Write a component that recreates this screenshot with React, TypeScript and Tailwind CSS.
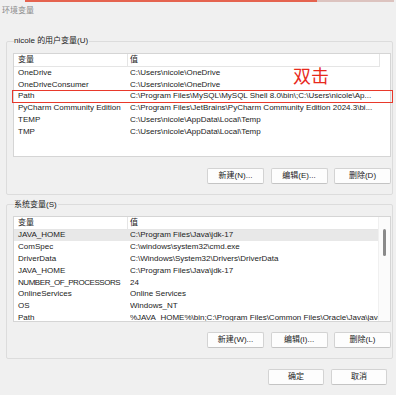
import React from 'react';

type Row = { name: string; value: string; tight?: boolean };

const userVars: Row[] = [
  { name: 'OneDrive', value: 'C:\\Users\\nicole\\OneDrive' },
  { name: 'OneDriveConsumer', value: 'C:\\Users\\nicole\\OneDrive' },
  { name: 'Path', value: 'C:\\Program Files\\MySQL\\MySQL Shell 8.0\\bin\\;C:\\Users\\nicole\\Ap...' },
  { name: 'PyCharm Community Edition', value: 'C:\\Program Files\\JetBrains\\PyCharm Community Edition 2024.3\\bi...' },
  { name: 'TEMP', value: 'C:\\Users\\nicole\\AppData\\Local\\Temp' },
  { name: 'TMP', value: 'C:\\Users\\nicole\\AppData\\Local\\Temp' },
];

const sysVars: Row[] = [
  { name: 'JAVA_HOME', value: 'C:\\Program Files\\Java\\jdk-17' },
  { name: 'ComSpec', value: 'C:\\windows\\system32\\cmd.exe' },
  { name: 'DriverData', value: 'C:\\Windows\\System32\\Drivers\\DriverData' },
  { name: 'JAVA_HOME', value: 'C:\\Program Files\\Java\\jdk-17' },
  { name: 'NUMBER_OF_PROCESSORS', value: '24', tight: true },
  { name: 'OnlineServices', value: 'Online Services' },
  { name: 'OS', value: 'Windows_NT' },
  { name: 'Path', value: '%JAVA_HOME%\\bin;C:\\Program Files\\Common Files\\Oracle\\Java\\javapath' },
];

function Btn({ label, w = 'w-[57px]' }: { label: string; w?: string }) {
  return (
    <button className={`${w} h-[16px] bg-[#fdfdfd] border border-[#d3d3d3] border-b-[#c4c4c4] rounded-[2px] text-[8px] text-[#1b1b1b] leading-none`}>
      {label}
    </button>
  );
}

function Header() {
  return (
    <div className="flex h-[13px] w-[366px] border-b border-[#e5e5e5] items-center text-[8px] leading-none shrink-0">
      <div className="w-[114px] h-full flex items-center pl-[4px] border-r border-[#e5e5e5]">变量</div>
      <div className="flex-1 h-full flex items-center pl-[2px] border-r border-[#e5e5e5]">值</div>
    </div>
  );
}

function VarRow({ row, marked, selected }: { row: Row; marked?: boolean; selected?: boolean }) {
  return (
    <div className={`relative flex h-[11.8px] shrink-0 items-center text-[8px] leading-none whitespace-nowrap ${selected ? 'bg-[#e8e8e8] w-[366px]' : ''}`}>
      <div className={`w-[116px] pl-[4px] shrink-0 overflow-hidden ${row.tight ? 'tracking-[-0.45px]' : ''}`}>{row.name}</div>
      <div className="flex-1 min-w-0 overflow-hidden">{row.value}</div>
      {marked && (
        <span className="absolute -left-[2px] -right-[2.5px] -top-[0.5px] -bottom-[0.5px] border-[1.5px] border-[#e8392b]" />
      )}
    </div>
  );
}

export default function App() {
  return (
    <div className="w-[396px] h-[395px] bg-[#f0f0f0] flex flex-col overflow-hidden text-[#1b1b1b] font-['Liberation_Sans','Noto_Sans_CJK_SC',sans-serif]">
      <div className="flex h-[2px] shrink-0">
        <div className="ml-[25px] w-[292px] bg-[#e5634f]" />
        <div className="w-[77px] bg-[#dcc3bf]" />
      </div>
      <div className="h-[18px] leading-[18px] text-[8px] text-[#8a8a8a] pl-[2px] shrink-0">环境变量</div>

      <fieldset className="min-w-0 mt-[15px] ml-[6px] mr-[3px] border border-[#dcdcdc] rounded-[2px] pb-[10px] pr-[1px] pl-[6px]">
        <legend className="text-[8px] leading-[12px] ml-[1px] pr-[1px]">nicole 的用户变量(U)</legend>
        <div className="relative mt-[6px] h-[104px] bg-white border border-[#d5d5d5]">
          <Header />
          {userVars.map((r) => (
            <VarRow key={r.name} row={r} marked={r.name === 'Path'} />
          ))}
          <span className="absolute left-[279px] top-[14px] text-[18px] leading-none text-[#e8291c]">双击</span>
        </div>
        <div className="flex justify-end gap-[6.5px] mt-[10.5px]">
          <Btn label="新建(N)..." />
          <Btn label="编辑(E)..." />
          <Btn label="删除(D)" />
        </div>
      </fieldset>

      <fieldset className="min-w-0 mt-[4px] ml-[6px] mr-[3px] border border-[#dcdcdc] rounded-[2px] pb-[10px] pr-[1px] pl-[6px]">
        <legend className="text-[8px] leading-[12px] ml-[1px] pr-[1px]">系统变量(S)</legend>
        <div className="mt-[5px] h-[106px] bg-white border border-[#d5d5d5] flex overflow-hidden">
          <div className="flex-1 min-w-0 flex flex-col overflow-hidden">
            <Header />
            {sysVars.map((r, i) => (
              <VarRow key={i} row={r} selected={i === 0} />
            ))}
          </div>
          <div className="w-[12px] border-l border-[#f0f0f0] bg-[#fbfbfb] flex justify-center pt-[12px] shrink-0">
            <div className="w-[2.5px] h-[27px] rounded-full bg-[#8a8a8a]" />
          </div>
        </div>
        <div className="flex justify-end gap-[6.5px] mt-[10.5px]">
          <Btn label="新建(W)..." />
          <Btn label="编辑(I)..." />
          <Btn label="删除(L)" />
        </div>
      </fieldset>

      <div className="flex justify-end gap-[7px] mt-[10px] mr-[9px]">
        <Btn label="确定" w="w-[56px]" />
        <Btn label="取消" w="w-[56px]" />
      </div>
    </div>
  );
}
